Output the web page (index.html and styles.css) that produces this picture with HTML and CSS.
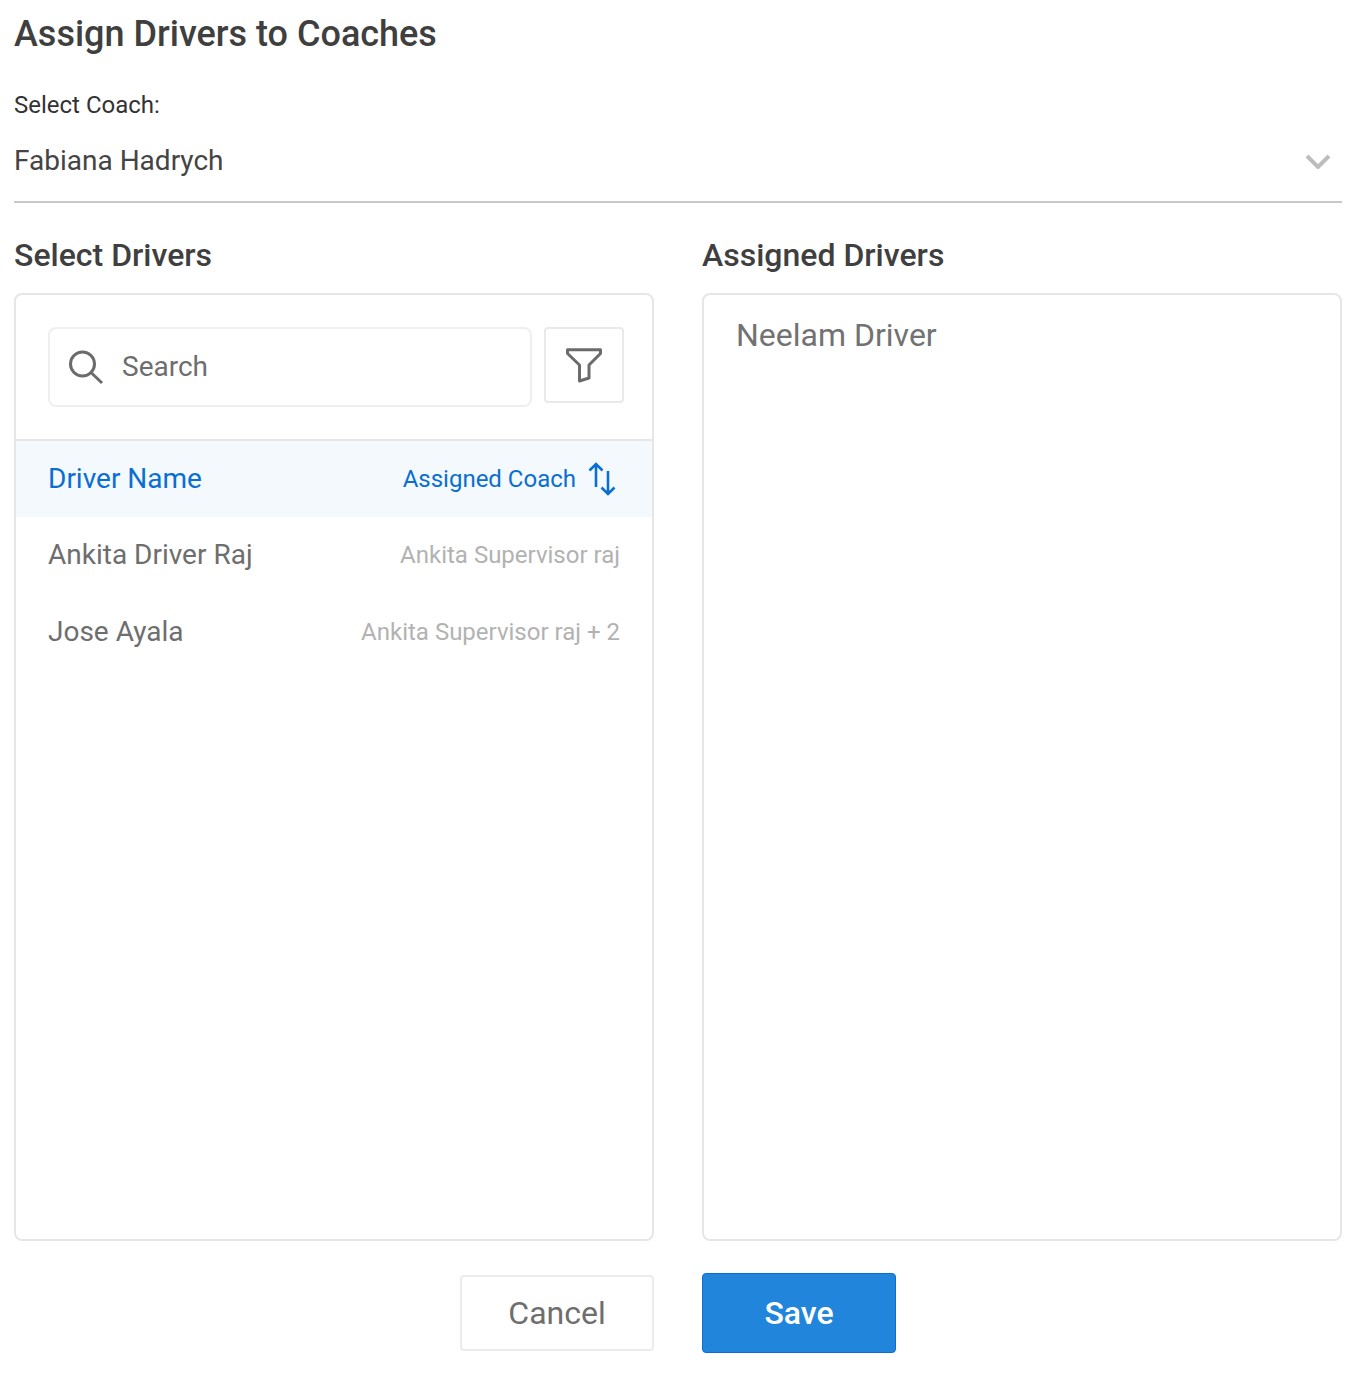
FILE: index.html
```html
<!DOCTYPE html>
<html lang="en">
<head>
<meta charset="utf-8">
<title>Assign Drivers to Coaches</title>
<link rel="stylesheet" href="styles.css">
</head>
<body>
<main class="page">
  <h1 class="title">Assign Drivers to Coaches</h1>
  <label class="coach-label">Select Coach:</label>
  <div class="coach-select">
    <span class="coach-value">Fabiana Hadrych</span>
    <svg class="chevron" width="26" height="16" viewBox="0 0 26 16"><path d="M2 3l11 11L24 3" fill="none" stroke="#bdbdbd" stroke-width="4"/></svg>
  </div>
  <div class="columns">
    <section class="column">
      <h2 class="col-title">Select Drivers</h2>
      <div class="panel">
        <div class="toolbar">
          <div class="search">
            <svg class="search-icon" width="36" height="36" viewBox="0 0 36 36"><circle cx="14.5" cy="15" r="12" fill="none" stroke="#6b6b6b" stroke-width="3"/><path d="M23 23.500L34 34" fill="none" stroke="#6b6b6b" stroke-width="3"/></svg>
            <span class="search-text">Search</span>
          </div>
          <button class="filter" type="button">
            <svg width="40" height="40" viewBox="0 0 40 40"><path d="M3.500 4.800H36.500V8.500L25 20V33L15.500 36V20L3.500 8.500Z" fill="none" stroke="#6b6b6b" stroke-width="3" stroke-linejoin="round"/></svg>
          </button>
        </div>
        <div class="row head">
          <span class="name">Driver Name</span>
          <span class="coach">Assigned Coach
            <svg class="sort" width="28" height="34" viewBox="0 0 28 34"><path d="M8 2V25M1.500 8.500L8 2l6.500 6.500M20 9V32M13.500 25.500L20 32l6.500-6.500" fill="none" stroke="#0a6fd1" stroke-width="2.600"/></svg>
          </span>
        </div>
        <div class="row">
          <span class="name">Ankita Driver Raj</span>
          <span class="coach">Ankita Supervisor raj</span>
        </div>
        <div class="row">
          <span class="name">Jose Ayala</span>
          <span class="coach">Ankita Supervisor raj + 2</span>
        </div>
      </div>
    </section>
    <section class="column">
      <h2 class="col-title">Assigned Drivers</h2>
      <div class="panel assigned">Neelam Driver</div>
    </section>
  </div>
  <div class="actions">
    <div class="action-cell end"><button class="btn cancel" type="button">Cancel</button></div>
    <div class="action-cell"><button class="btn save" type="button">Save</button></div>
  </div>
</main>
</body>
</html>
```
FILE: styles.css
```css
* { box-sizing: border-box; }
html, body { margin: 0; background: #fff; }
body { font-family: Roboto, "Liberation Sans", sans-serif; color: #3c3c3c; }
.page { width: 1364px; height: 1380px; padding: 12px 22px 0 14px; }
.title { margin: 0; font-size: 36px; line-height: 44px; font-weight: 500; color: #3f3f3f; }
.coach-label { display: block; margin-top: 36px; font-size: 24px; line-height: 26px; color: #333; }
.coach-select { display: flex; justify-content: space-between; align-items: center; height: 85px; padding: 3px 11px 0 0; border-bottom: 2px solid #c9c9c9; font-size: 28px; color: #444; }
.coach-value { margin-bottom: 2px; }
.columns { display: grid; grid-template-columns: 640px 640px; gap: 48px; margin-top: 32px; }
.col-title { margin: 0; font-size: 32px; line-height: 40px; font-weight: 500; color: #3f3f3f; }
.panel { height: 948px; margin-top: 18px; border: 2px solid #e6e6e6; border-radius: 8px; background: #fff; overflow: hidden; }
.toolbar { display: flex; align-items: flex-start; gap: 12px; height: 146px; padding: 32px 28px 0 32px; border-bottom: 2px solid #e6e6e6; }
.search { display: flex; align-items: center; gap: 18px; width: 484px; height: 80px; padding-left: 18px; border: 2px solid #efefef; border-radius: 8px; font-size: 28px; color: #6e6e6e; }
.search-text { margin-bottom: 2px; }
.filter { display: flex; align-items: center; justify-content: center; width: 80px; height: 76px; padding: 0; background: #fff; border: 2px solid #e9e9e9; border-radius: 4px; }
.row { display: flex; justify-content: space-between; align-items: center; height: 77px; padding: 0 32px; }
.row .name { margin-bottom: 2px; font-size: 28px; color: #6e6e6e; }
.row .coach { margin-bottom: 2px; font-size: 24px; color: #b2b2b2; }
.row.head { height: 76px; background: #f4f9fe; }
.row.head .name, .row.head .coach { color: #0a6fd1; }
.row.head .coach { display: flex; align-items: center; gap: 12px; margin: 0 4px 0 0; }
.assigned { padding: 19px 32px; font-size: 32px; line-height: 42px; color: #727272; }
.actions { display: grid; grid-template-columns: 640px 640px; gap: 48px; margin-top: 32px; align-items: center; }
.action-cell { display: flex; }
.action-cell.end { justify-content: flex-end; }
.btn { width: 194px; font-family: inherit; font-size: 32px; border-radius: 4px; padding: 0; }
.cancel { height: 76px; background: #fff; border: 2px solid #ececec; color: #6e6e6e; }
.save { height: 80px; background: #2185db; border: 1px solid #0a6fd1; color: #fff; font-weight: 500; }
```
